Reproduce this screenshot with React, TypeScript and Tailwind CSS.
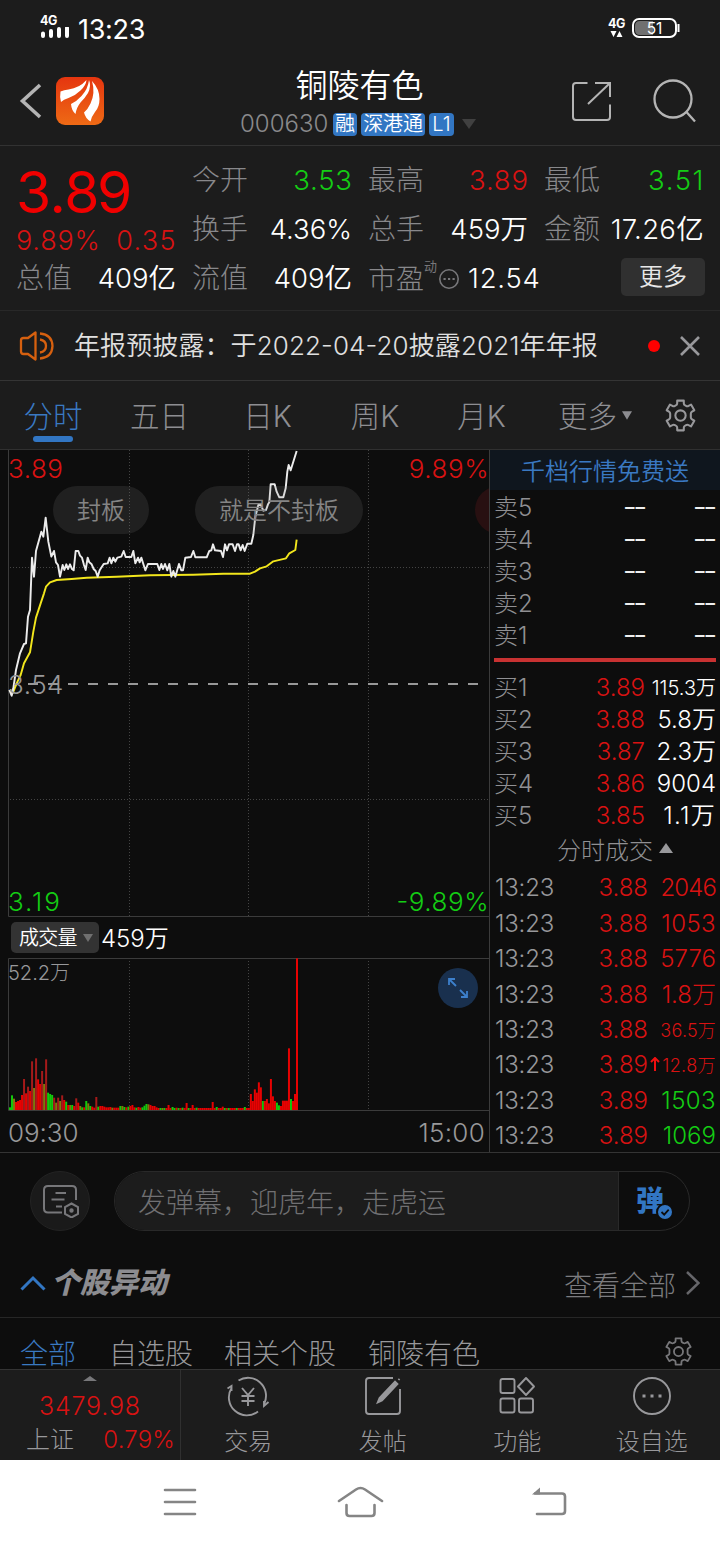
import React from "react";

type Box = { children?: React.ReactNode; className?: string };

const GREEN = "text-[#14cc14]";
const RED = "text-[#d81212]";

const PRICE =
  "28,735 35,752 40,730 48,675 60,625 72,597 78,595 84,515 90,495 96,338 102,395 108,318 124,260 130,275 137,218 145,290 154,335 162,318 168,352 174,360 180,395 188,360 193,375 199,358 204,372 210,358 216,372 221,376 227,318 235,318 240,332 246,338 252,360 257,375 263,338 268,352 275,358 281,372 287,378 293,395 299,376 311,357 323,355 329,338 334,355 340,338 346,350 352,338 364,335 371,318 377,336 394,336 400,318 406,355 414,338 419,352 424,338 430,357 436,376 444,357 472,357 478,375 484,357 489,372 495,357 502,376 508,357 514,395 520,378 526,395 537,357 544,376 549,376 556,338 573,336 580,318 586,337 620,337 628,318 634,316 639,298 645,316 663,318 669,336 675,298 681,316 687,298 698,298 705,318 711,298 716,298 722,316 728,300 734,318 742,296 754,296 760,270 766,215 775,180 782,178 790,197 798,195 804,178 808,172 812,118 824,118 830,140 838,157 850,157 857,130 862,80 866,60 872,76 890,18";
const AVERAGE =
  "38,745 50,715 62,690 72,655 90,622 100,560 108,518 122,475 132,445 138,425 150,412 170,405 215,402 260,398 350,395 450,391 580,389 670,386 750,386 765,380 780,370 800,364 820,349 858,340 868,325 886,315 890,284";

const VOLUMES =
  "8g 44g 34o 24r 27r 30r 45r 93d 50r 70d 57r 146d 66o 155d 92r 78r 117d 78o 152d 52g 48g 45g 37d 22o 37d 27o 44d 30r 25g 15r 15o 15g 12r 35d 22r 12o 8g 8r 27g 20o 12g 10r 7r 39d 10g 12r 12r 10r 8r 8r 9r 7o 7r 7r 7r 12g 12o 9g 8r 10g 12r 15r 8r 7g 9r 7r 8g 13g 18g 17o 15r 12r 12r 8r 6r 6g 6o 6g 6r 15r 6r 9g 6g 7r 6g 6r 7g 6r 21r 6g 6r 15r 6r 7g 6r 6r 6r 6r 6r 6r 6r 24r 6r 9g 6r 6r 10r 6g 6r 6g 6r 6r 6r 6g 6r 6r 6r 9g 6r 6r 48r 27r 62r 52r 83r 68r 27g 27r 33r 20r 93r 41r 27r 22g 14g 12r 28r 28r 28r 185r 33g 27r 48r 455r".split(" ");
const BAR_COLORS: Record<string, string> = { g: "#12c80c", r: "#e60202", d: "#a51a1a", o: "#80780c" };

function Gear({ className }: Box) {
  return (
    <svg viewBox="0 0 32 32" className={className} fill="none" stroke="currentColor" strokeWidth="2" strokeLinejoin="round">
      <path d="M12.8 1.6h6.4v2.6q0 1.5 1.3 2l.9.5q1.2.7 2.4 0l2.4-1.3 3.2 5.5-2.2 1.3q-1.2.7-1.2 2v3.600q0 1.300 1.200 2l2.200 1.300-3.200 5.500-2.400-1.300q-1.200-.7-2.400 0l-.9.5q-1.300.5-1.300 2v2.600h-6.400v-2.600q0-1.500-1.300-2l-.9-.5q-1.200-.7-2.400 0l-2.400 1.300-3.200-5.500 2.200-1.300q1.200-.7 1.200-2v-3.600q0-1.300-1.200-2l-2.200-1.300 3.200-5.500 2.400 1.300q1.200.7 2.400 0l.9-.5q1.300-.5 1.300-2z" />
      <circle cx="16" cy="16" r="5" />
    </svg>
  );
}

function StatusBar() {
  return (
    <div className="flex h-14 shrink-0 items-start pl-10 pr-[39px] text-white">
      <div className="mt-[14px] h-[26px] w-[30px]">
        <div className="text-[12.500px] font-bold leading-[13px] tracking-[-0.4px]">4G</div>
        <svg viewBox="0 0 30 12" className="block h-3 w-[30px]">
          <path d="M3 6.500V9M11 4v5M19 2v7M27 1v8" stroke="#fff" strokeWidth="4" strokeLinecap="round" />
        </svg>
      </div>
      <span className="ml-2 mt-[14px] text-[27px] leading-8 tracking-[-0.3px]">13:23</span>
      <div className="ml-auto mt-[17px] h-[22px] w-[18px]">
        <div className="text-[12.500px] font-bold leading-[13px] tracking-[-0.4px]">4G</div>
        <svg viewBox="0 0 18 7" className="block h-[7px] w-[18px]"><path d="M2.500 1h6l-3 6zM8.500 7h6l-3-6z" fill="#fff" /></svg>
      </div>
      <svg viewBox="0 0 49 20" className="ml-[6px] mt-[18px] h-5 w-[49px]">
        <path d="M8 3h13v14H8q-5 0-5-5V8q0-5 5-5z" fill="#707070" />
        <rect x="1" y="1" width="43" height="18" rx="6" fill="none" stroke="#fff" strokeWidth="2" />
        <path d="M46.500 6v8" stroke="#fff" strokeWidth="2" />
        <text x="22.500" y="15.500" textAnchor="middle" fontSize="15.500" fill="#fff" fontFamily="Inter, sans-serif">51</text>
      </svg>
    </div>
  );
}

function Tag({ children, className }: Box) {
  return (
    <span className={`ml-1 flex h-[23px] items-center justify-center rounded-[4px] bg-[#3276c3] text-[20px] font-[350] leading-[23px] text-white ${className}`}>
      {children}
    </span>
  );
}

function Header() {
  return (
    <header className="flex h-[90px] shrink-0 items-start border-b border-[#323232] text-[#b4b4b4]">
      <svg viewBox="0 0 24 40" className="ml-[18px] mt-[25px] h-10 w-6" fill="none" stroke="currentColor" strokeWidth="3.600">
        <path d="M22 4 4.500 20 22 36" />
      </svg>
      <svg viewBox="0 0 48 48" className="ml-[14px] mt-[21px] h-12 w-12">
        <defs>
          <linearGradient id="logo" x1="0" y1="0" x2="0" y2="1">
            <stop offset="0" stopColor="#e5350f" />
            <stop offset="1" stopColor="#ee6a15" />
          </linearGradient>
        </defs>
        <rect width="48" height="48" rx="9" fill="url(#logo)" />
        <g fill="#fff">
          <path d="M30.500 3q-.5 5.500-6 10.500-5 5-12 7.500-5 1.500-7.500 4-1.500-5-.5-10.500 3.500-1.500 8-2 11-1.500 18-9.500z" />
          <path d="M33 3q2.500 6-1 13-3 5-7.500 9.500-4 5-5 11.500-4-3.500-4.500-10 5.500-2.500 10.500-8 6.500-7 7.500-16z" />
          <path d="M36 4q7.500 8 7.500 18 0 8-4.500 13-3.500 4.500-4.500 9.500-5-3-6.500-9 4-3.500 6.500-9 5-10.500 1.500-22.500z" />
        </g>
      </svg>
      <div className="ml-[108px] flex w-[300px] flex-col items-center pt-3">
        <h1 className="mr-[10px] w-[180px] pl-[5px] text-center text-[32px] font-[350] leading-9 text-white">铜陵有色</h1>
        <div className="mt-[8px] flex h-[24px] items-center self-start pl-[28px]">
          <span className="w-[89px] text-[24px] font-light leading-6 text-[#8a8a8c]">000630</span>
          <Tag className="w-6">融</Tag>
          <Tag className="w-16 tracking-[-0.1px]">深港通</Tag>
          <Tag className="w-[25px]">L1</Tag>
          <svg viewBox="0 0 14 10" className="ml-2 h-[10px] w-[14px]"><path d="M0 0h14L7 10z" fill="#404040" /></svg>
        </div>
      </div>
      <svg viewBox="0 0 40 40" className="ml-[59px] mt-[25px] h-10 w-10" fill="none" stroke="currentColor" strokeWidth="2">
        <path d="M16.500 2H5Q2 2 2 5v31q0 3 3 3h31q3 0 3-3V23.500M24 2h15v14M38.500 2.500 17 23" />
      </svg>
      <svg viewBox="0 0 44 44" className="ml-[41px] mt-[23px] h-11 w-11" fill="none" stroke="currentColor" strokeWidth="2.300">
        <circle cx="21" cy="20" r="18.500" />
        <path d="m34 32.500 9 10" />
      </svg>
    </header>
  );
}

function Stat({ label, value, color = "text-white font-[350]" }: { label: string; value: string; color?: string }) {
  return (
    <div className="flex h-[49px] items-center justify-between leading-[49px]">
      <span className="text-[28px] font-light text-[#88888b]">{label}</span>
      <span className={`text-[27.500px] ${color}`}>{value}</span>
    </div>
  );
}

const GREEN_VALUE = "text-[#14cc14] font-[350] tracking-[0.8px] -mr-[0.8px]";
const RED_VALUE = "text-[#d81212] font-[350] tracking-[0.8px] -mr-[0.8px]";

function Quote() {
  return (
    <section className="grid h-[165px] shrink-0 grid-cols-4 gap-x-4 border-b border-[#282828] px-4 pt-[10px]">
      <div>
        <div className="h-[72px] pt-[14px] text-[57px] leading-[46px] tracking-[-1.600px] text-[#f00000]">
          <span className="tracking-[-0.5px]">3.</span>
          <span className="-ml-[1px] tracking-[-2.500px]">89</span>
        </div>
        <div className={`flex h-[26px] items-center justify-between text-[27px] font-light leading-[26px] tracking-[0.8px] ${RED}`}>
          <span>9.89%</span><span className="-mr-[0.8px] tracking-[1.300px]">0.35</span>
        </div>
        <Stat label="总值" value="409亿" />
      </div>
      <div>
        <Stat label="今开" value="3.53" color={GREEN_VALUE} />
        <Stat label="换手" value="4.36%" />
        <Stat label="流值" value="409亿" />
      </div>
      <div>
        <Stat label="最高" value="3.89" color={RED_VALUE} />
        <Stat label="总手" value="459万" />
        <div className="flex h-[49px] items-center whitespace-nowrap">
          <span className="text-[28px] font-light text-[#88888b]">市盈</span>
          <span className="mb-[25px] text-[13px] leading-4 text-[#77777a]">动</span>
          <svg viewBox="0 0 20 20" className="ml-[2px] h-5 w-5 shrink-0" fill="none" stroke="#77777a" strokeWidth="1.600">
            <circle cx="10" cy="10" r="9.200" />
            <path d="M4.500 10h2.200M9 10h2.200M13.500 10h2.200" strokeWidth="2" />
          </svg>
          <span className="ml-[9px] text-[27.500px] font-[350] tracking-[0.8px] text-white">12.54</span>
        </div>
      </div>
      <div>
        <Stat label="最低" value="3.51" color="text-[#14cc14] font-[350] tracking-[1.600px] -mr-[1px]" />
        <Stat label="金额" value="17.26亿" color="text-white font-[350] tracking-[0.3px]" />
        <button className="ml-[77px] mt-[4px] block h-[38px] w-[84px] rounded-[5px] bg-[#303030] text-[24px] font-[350] leading-[38px] text-[#e8e8e8]">更多</button>
      </div>
    </section>
  );
}

function Notice() {
  return (
    <section className="flex h-[70px] shrink-0 items-center border-b border-[#343434]">
      <svg viewBox="0 0 36 30" className="ml-[19px] h-[30px] w-9" fill="none" stroke="#d6600f" strokeWidth="2.300">
        <path d="M16.500 1.500v27L9 23H4.500Q2 23 2 20.500v-11Q2 7 4.500 7H9z" strokeLinejoin="round" />
        <path d="M21 8.500q6 1 6 6.500t-6 6.500M21 2.500q12 1 12.500 12.500Q33 26.500 21 27.500" />
      </svg>
      <span className="ml-[19px] whitespace-nowrap text-[26px] font-[350] leading-[69px] tracking-[0.1px] text-[#e0e0e0] [font-feature-settings:'case']">年报预披露：于2022-04-20披露2021年年报</span>
      <span className="ml-auto h-3 w-3 rounded-full bg-[#ff0000]" />
      <svg viewBox="0 0 20 20" className="ml-5 mr-5 h-5 w-5" stroke="#98989b" strokeWidth="2.600"><path d="M1 1l18 18M19 1 1 19" /></svg>
    </section>
  );
}

function Tabs() {
  return (
    <nav className="flex h-[69px] shrink-0 border-b border-[#303030] text-[29.500px] font-light leading-[71px] text-[#8e8e92]">
      <div className="flex w-[106px] flex-col items-center text-[#3a79c2]">
        <span className="h-[55px]">分时</span>
        <span className="h-[6px] w-10 rounded-full bg-[#3276c3]" />
      </div>
      <div className="w-[107px] text-center">五日</div>
      <div className="w-[109px] text-center">日K</div>
      <div className="w-[106px] text-center">周K</div>
      <div className="w-[107px] text-center">月K</div>
      <div className="flex pl-[23px]">更多<svg viewBox="0 0 12 10" className="ml-[5px] mt-[30px] h-[9px] w-[10px]"><path d="M0 0h12L6 10z" fill="#8c8c90" /></svg></div>
      <Gear className="ml-auto mr-[23px] mt-[18px] h-[33px] w-[33px] text-[#98989b]" />
    </nav>
  );
}

function Charts() {
  return (
    <div className="w-[489px] shrink-0">
      <div className="relative h-[467px] overflow-hidden">
        <svg viewBox="0 0 489 467" className="block h-[467px] w-[489px]" fill="none">
          <path d="M8.500 0v466.500H489" stroke="#3b3b3b" />
          <path d="M129.500 0v466M248.500 0v466M368.500 0v466M10 117.500h479M10 349.500h479" stroke="#444" strokeDasharray="1 2" />
          <path d="M28 234h452" stroke="#989898" strokeWidth="2" strokeDasharray="10 10" />
          <g transform="translate(0 -5) scale(.33333)" strokeWidth="5.800" strokeLinejoin="round">
            <polyline points={AVERAGE} stroke="#f2e61c" />
            <polyline points={PRICE} stroke="#ececec" />
          </g>
        </svg>
        <span className={`absolute left-2 top-1 text-[26px] font-light leading-[30px] tracking-[0.5px] ${RED}`}>3.89</span>
        <span className={`absolute right-0 top-1 text-[26px] font-light leading-[30px] tracking-[0.5px] ${RED}`}>9.89%</span>
        <span className="absolute left-2 top-[220px] text-[26px] font-light leading-[30px] tracking-[0.5px] text-[#98989a]">3.54</span>
        <span className={`absolute left-2 top-[437px] text-[26px] font-light leading-[30px] tracking-[1.900px] ${GREEN}`}>3.19</span>
        <span className={`absolute right-0 top-[437px] text-[26px] font-light leading-[30px] tracking-[0.5px] [font-feature-settings:'case'] ${GREEN}`}>-9.89%</span>
        <span className="absolute left-[53px] top-9 flex h-12 w-24 items-center justify-center rounded-full bg-[#8080802b] pt-[1px] text-[24px] font-[350] text-[#858585]">封板</span>
        <span className="absolute left-[195px] top-9 flex h-12 w-[168px] items-center justify-center rounded-full bg-[#8080802b] pt-[1px] text-[24px] font-[350] text-[#858585]">就是不封板</span>
        <span className="absolute left-[475px] top-9 h-12 w-24 rounded-full bg-[#281011]" />
      </div>
      <div className="flex h-[41px] items-center pb-[1px] pl-[11px]">
        <div className="flex h-[31px] w-[88px] items-center rounded-[5px] bg-[#333333] pl-2 pt-[1px] text-[20px] font-[350] tracking-[-0.8px] text-white">
          成交量
          <svg viewBox="0 0 10 8" className="ml-[6px] h-2 w-[10px]"><path d="M0 0h10L5 8z" fill="#707070" /></svg>
        </div>
        <span className="ml-[2px] mt-[4px] text-[24px] font-[350] text-white">459万</span>
      </div>
      <div className="relative h-[153px]">
        <svg viewBox="0 0 489 153" className="block h-[153px] w-[489px]" fill="none">
          <path d="M129.500 0v152M248.500 0v152M368.500 0v152" stroke="#444" strokeDasharray="1 2" />
          <path d="M489 .5H8.500v152H489" stroke="#3b3b3b" />
          {VOLUMES.map((v, i) => {
            const h = parseInt(v) / 3;
            return <rect key={i} x={9 + i * 2.007} y={152 - h} width="2" height={h} fill={BAR_COLORS[v.slice(-1)]} />;
          })}
        </svg>
        <span className="absolute left-2 top-[3px] text-[20px] font-light leading-6 text-[#98989a]">52.2万</span>
        <span className="absolute left-[438px] top-[10px] flex h-10 w-10 items-center justify-center rounded-full bg-[#19304e]">
          <svg viewBox="0 0 22 22" className="h-[22px] w-[22px]" fill="none" stroke="#3d80cc" strokeWidth="1.800">
            <path d="M2 8V2h6M2 2l7 7M20 14v6h-6M20 20l-7-7" />
          </svg>
        </span>
      </div>
      <div className="flex h-[41px] items-center justify-between pl-2 pr-[4px] pt-[2px] text-[26px] font-light tracking-[-0.1px] text-[#98989a]">
        <span>09:30</span><span className="tracking-[0.3px]">15:00</span>
      </div>
    </div>
  );
}

const ASKS = ["卖5", "卖4", "卖3", "卖2", "卖1"];
const BIDS: [string, string, string][] = [
  ["买1", "3.89", "115.3万"],
  ["买2", "3.88", "5.8万"],
  ["买3", "3.87", "2.3万"],
  ["买4", "3.86", "9004"],
  ["买5", "3.85", "1.1万"],
];
const TRADES: [string, string, string, string][] = [
  ["3.88", "2046", RED, "tracking-[-0.9px]"],
  ["3.88", "1053", RED, "tracking-[0.4px]"],
  ["3.88", "5776", RED, ""],
  ["3.88", "1.8万", RED, ""],
  ["3.88", "36.5万", RED, "text-[18px] tracking-[0.2px]"],
  ["3.89", "12.8万", RED, "text-[18px] tracking-[0.4px]"],
  ["3.89", "1503", GREEN, "tracking-[0.4px]"],
  ["3.89", "1069", GREEN, ""],
];

function Dashes({ className }: Box) {
  return <span className={`text-right text-[31px] font-[350] tracking-[-3.400px] text-[#eeeeee] [font-feature-settings:'case'] ${className}`}>--</span>;
}

function OrderBook() {
  return (
    <div className="flex-1 border-l border-[#3b3b3b] text-[24px]">
      <div className="h-10 bg-[#0f161e] text-center font-[350] leading-[44px] text-[#3a79c2]">千档行情免费送</div>
      <div className="pl-[4px] pr-1 pt-[2px]">
        {ASKS.map((a) => (
          <div key={a} className="flex h-8 items-center leading-8">
            <span className="w-[52px] font-light text-[#909093]">{a}</span>
            <Dashes className="w-[98px]" />
            <Dashes className="flex-1 pr-[2px]" />
          </div>
        ))}
      </div>
      <div className="ml-1 mr-1 mt-[6px] h-1 bg-[#c83232]" />
      <div className="pl-[4px] pr-1 pt-[10px]">
        {BIDS.map(([l, p, v]) => (
          <div key={l} className="flex h-8 items-center leading-8">
            <span className="w-[52px] font-light text-[#909093]">{l}</span>
            <span className={`w-[99px] text-right font-light ${RED}`}>{p}</span>
            <span className={`flex-1 text-right font-[350] text-white ${v.length > 5 ? "text-[20px]" : v === "1.1万" ? "tracking-[1.300px]" : ""}`}>{v}</span>
          </div>
        ))}
      </div>
      <div className="flex h-[38px] items-center pl-[67px] font-light text-[#909093]">
        <span className="leading-9">分时成交</span>
        <svg viewBox="0 0 14 10" className="mb-[6px] ml-[6px] h-[10px] w-[14px]"><path d="M0 10 7 0l7 10z" fill="#98989b" /></svg>
      </div>
      <div className="pl-[5px] pr-1 font-light">
        {TRADES.map(([p, v, c, size], i) => (
          <div key={i} className="flex h-[35.400px] items-center pt-[1.500px]">
            <span className="w-[62px] tracking-[-0.2px] text-[#98989b]">13:23</span>
            <span className={`w-[91px] text-right ${RED}`}>{p}</span>
            {i === 5 && (
              <svg viewBox="0 0 10 14" className="-mr-[12px] mb-[3px] ml-[2px] h-[14px] w-[10px]" fill="none" stroke="#f01010" strokeWidth="2"><path d="M5 14V1M1 5l4-4 4 4" /></svg>
            )}
            <span className={`flex-1 text-right ${c} ${size}`}>{v}</span>
          </div>
        ))}
      </div>
    </div>
  );
}

function Barrage() {
  return (
    <div className="flex h-[97px] shrink-0 items-start border-t border-[#343434] pl-[30px] pt-[18px]">
      <div className="flex h-[60px] w-[60px] items-center justify-center rounded-full border border-[#232323] bg-[#1a1a1a]">
        <svg viewBox="0 0 38 34" className="ml-[2px] h-[34px] w-[38px]" fill="none" stroke="#77777a" strokeWidth="2">
          <path d="M20 28.500H6Q2 28.500 2 24.500V6q0-4 4-4h24q4 0 4 4v10M13.500 9H24M9.500 15.500h13M14 22.500h6" />
          <path d="m29.500 19.500 6.500 3.500v7L29.500 33.500 23 30v-7z" />
          <circle cx="29.500" cy="26.500" r="1.200" fill="#77777a" />
        </svg>
      </div>
      <div className="ml-6 flex h-[60px] w-[576px] overflow-hidden rounded-full border border-[#292929]">
        <div className="flex-1 border-r border-[#292929] bg-[#1c1c1c] pl-[23px] text-[28px] font-light leading-[62px] text-[#707072]">发弹幕，迎虎年，走虎运</div>
        <div className="relative w-[70px] pl-[17px] text-[28px] font-black leading-[58px] text-[#3276c3]">
          弹
          <svg viewBox="0 0 18 18" className="absolute left-[37px] top-[31px] h-[18px] w-[18px]">
            <circle cx="9" cy="9" r="8" fill="#3276c3" stroke="#0d0d0d" strokeWidth="2" />
            <path d="m5.500 9 2.700 2.700 4.500-5" fill="none" stroke="#0d0d0d" strokeWidth="1.800" />
          </svg>
        </div>
      </div>
    </div>
  );
}

function Movers() {
  return (
    <section className="h-[120px] shrink-0">
      <div className="flex h-[69px] items-center border-b border-[#262626] pl-5 pr-5">
        <svg viewBox="0 0 26 16" className="h-4 w-[26px]" fill="none" stroke="#3276c3" strokeWidth="3"><path d="M1.500 14.500 13 3l11.500 11.500" /></svg>
        <h2 className="ml-[5px] text-[29px] font-black italic leading-[68px] text-[#8c8c90]">个股异动</h2>
        <span className="ml-auto mt-[5px] text-[28px] font-light text-[#7c7c7f]">查看全部</span>
        <svg viewBox="0 0 14 26" className="ml-[10px] h-[26px] w-[14px]" fill="none" stroke="#66666a" strokeWidth="2.500"><path d="m1 2 11.500 11L1 24" /></svg>
      </div>
      <div className="flex h-[51px] items-end pl-5 pr-[27px] text-[28px] font-light leading-[29px] text-[#98989b]">
        <span className="w-[89px] text-[#3a79c2]">全部</span>
        <span className="w-[115px]">自选股</span>
        <span className="w-[144px]">相关个股</span>
        <span>铜陵有色</span>
        <Gear className="mb-[3px] ml-auto h-[29px] w-[29px] text-[#77777a]" />
      </div>
    </section>
  );
}

function Action({ label, children }: { label: string; children: React.ReactNode }) {
  return (
    <div className="flex flex-1 flex-col items-center pt-[5px]">
      <svg viewBox="0 0 44 42" className="h-[42px] w-11" fill="none" stroke="#98989b" strokeWidth="1.900">{children}</svg>
      <span className="mt-[9px] text-[24px] font-light leading-8 text-[#98989b]">{label}</span>
    </div>
  );
}

function Actions() {
  return (
    <div className="flex h-[91px] shrink-0 border-t border-[#343434] bg-[#1c1c1c] pr-[1px]">
      <div className={`w-[181px] border-r border-[#303030] pt-[6px] font-light ${RED}`}>
        <svg viewBox="0 0 14 5" className="mx-auto block h-[5px] w-[14px]"><path d="M0 5 7 0l7 5z" fill="#77777a" /></svg>
        <div className="mt-[7px] text-center text-[25px] leading-9 tracking-[0.8px]">3479.98</div>
        <div className="flex items-center justify-between pl-[26px] pr-[5px] text-[24px] leading-8">
          <span className="text-[#98989b]">上证</span><span className="tracking-[0.2px]">0.79%</span>
        </div>
      </div>
      <Action label="交易">
        <path d="M12.500 5.500A18 18 0 0 1 38.500 28M5.500 13A18 18 0 0 0 32 36.500M1.500 13.500 5.500 11v5M42.500 27 38 31v-5" />
        <path d="m16 13 6 7 6-7M22 20v11M15.500 21h13M15.500 26h13" />
      </Action>
      <Action label="发帖">
        <path d="M32 3H8Q5 3 5 6v30q0 3 3 3h28q3 0 3-3V14" />
        <path d="M34 6.500 18.500 23l-1.800 4.500L21 25.500 36.500 9zM37.500 5l1-1.200" strokeWidth="1.800" fill="#98989b" />
      </Action>
      <Action label="功能">
        <rect x="5.500" y="4" width="14" height="14" rx="2" />
        <rect x="5.500" y="23.500" width="14" height="14" rx="2" />
        <rect x="24" y="23.500" width="14" height="14" rx="2" />
        <path d="m31 3 8 8.500-8 8.500-8-8.500z" strokeLinejoin="round" />
      </Action>
      <Action label="设自选">
        <circle cx="22" cy="21" r="18" />
        <path d="M12.500 21h3M20.500 21h3M28.500 21h3" strokeWidth="3" />
      </Action>
    </div>
  );
}

function SystemNav() {
  return (
    <div className="flex h-[84px] shrink-0 items-center bg-white pl-[163px]">
      <svg viewBox="0 0 34 30" className="h-[30px] w-[34px]" stroke="#858585" strokeWidth="2.600" strokeLinecap="round"><path d="M2 3h30M2 15h30M2 27h30" /></svg>
      <svg viewBox="0 0 48 34" className="ml-[139px] h-[34px] w-12" fill="none" stroke="#858585" strokeWidth="2.600" strokeLinecap="round" strokeLinejoin="round">
        <path d="M3 16 20 4.500q4.500-3 9 0L46 16M10.500 20v8q0 3 3 3h22q3 0 3-3v-8" />
      </svg>
      <svg viewBox="0 0 36 32" className="ml-[147px] h-8 w-9" fill="none" stroke="#858585" strokeWidth="2.600" strokeLinecap="round">
        <path d="M4 7.500h27q3 0 3 3V25q0 3-3 3H6" /><path d="M1 8.500 9 1.500v7z" fill="#858585" stroke="none" />
      </svg>
    </div>
  );
}

export default function App() {
  return (
    <div className="flex h-[1544px] w-[720px] flex-col overflow-hidden bg-[#0d0d0d] font-['Inter','Noto_Sans_CJK_SC',sans-serif]">
      <div className="flex shrink-0 flex-col bg-[#1c1c1c]">
        <StatusBar />
        <Header />
        <Quote />
        <Notice />
        <Tabs />
      </div>
      <main className="flex h-[702px] shrink-0">
        <Charts />
        <OrderBook />
      </main>
      <Barrage />
      <Movers />
      <Actions />
      <SystemNav />
    </div>
  );
}
